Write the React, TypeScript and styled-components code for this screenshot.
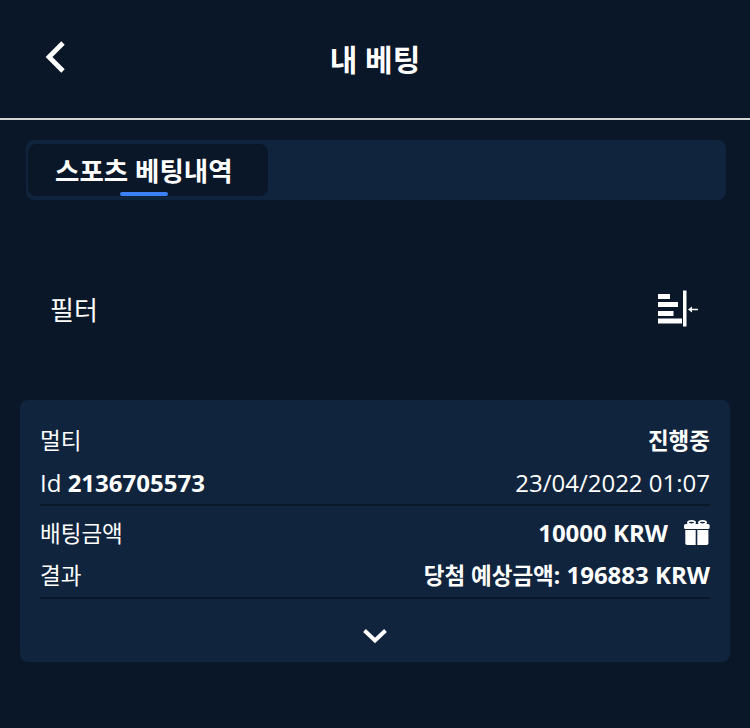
import React from "react";
import styled, { createGlobalStyle } from "styled-components";

const GlobalStyle = createGlobalStyle`
  html, body {
    margin: 0;
    padding: 0;
    background: #0a1729;
  }
  body {
    font-family: "Open Sans", "Noto Sans CJK KR", sans-serif;
    color: #ffffff;
  }
`;

const GiftIcon = () => (
  <svg width="26" height="25" viewBox="0 0 26 25" fill="none">
    <ellipse cx="7.5" cy="2.6" rx="3.6" ry="1.7" stroke="#fff" strokeWidth="1.8" />
    <ellipse cx="18.5" cy="2.6" rx="3.6" ry="1.7" stroke="#fff" strokeWidth="1.8" />
    <rect x="0" y="4" width="25.6" height="5" rx="1.5" fill="#fff" />
    <path d="M1.3 10 H11.7 V25 H3 Q1.3 25 1.3 23.3 Z" fill="#fff" />
    <path d="M13.3 10 H24.4 V23.3 Q24.4 25 22.7 25 H13.3 Z" fill="#fff" />
  </svg>
);

const App = () => {
  return (
    <Page>
      <GlobalStyle />
      <Header>
        <BackButton>
          <svg width="24" height="34" viewBox="0 0 24 34" fill="none">
            <path d="M19 3 L5 17 L19 31" stroke="#fff" strokeWidth="4.8" />
          </svg>
        </BackButton>
        <HeaderTitle>내 베팅</HeaderTitle>
      </Header>
      <TabBar>
        <ActiveTab>스포츠 베팅내역</ActiveTab>
      </TabBar>
      <FilterRow>
        <FilterLabel>필터</FilterLabel>
        <svg width="42" height="40" viewBox="0 0 42 40" fill="none">
          <rect x="2" y="4" width="12" height="5" fill="#fff" />
          <rect x="2" y="12" width="20" height="5" fill="#fff" />
          <rect x="2" y="21" width="15.5" height="5" fill="#fff" />
          <rect x="2" y="28.5" width="24" height="5" fill="#fff" />
          <rect x="27" y="0.5" width="3.5" height="36" fill="#fff" />
          <path d="M42 19.5 H34" stroke="#fff" strokeWidth="1.5" />
          <path d="M32 19.5 L36 16.5 V22.5 Z" fill="#fff" />
        </svg>
      </FilterRow>
      <Card>
        <Section>
          <Row>
            <Ko>멀티</Ko>
            <Ko $bold>진행중</Ko>
          </Row>
          <Row $low>
            <span>Id <Strong>2136705573</Strong></span>
            <span>23/04/2022 01:07</span>
          </Row>
        </Section>
        <Section>
          <Row>
            <Ko>배팅금액</Ko>
            <Amount>
              <Strong>10000 KRW</Strong>
              <GiftIcon />
            </Amount>
          </Row>
          <Row>
            <Ko>결과</Ko>
            <Strong><Ko $bold>당첨 예상금액:</Ko> 196883 KRW</Strong>
          </Row>
        </Section>
        <Expand>
          <svg width="26" height="16" viewBox="0 0 26 16" fill="none">
            <path d="M2.5 2.5 L13 12.5 L23.5 2.5" stroke="#fff" strokeWidth="4" />
          </svg>
        </Expand>
      </Card>
    </Page>
  );
};

const Page = styled.div`
  width: 750px;
  height: 728px;
  overflow: hidden;
  background: #0a1729;
`;

const Header = styled.header`
  position: relative;
  height: 118px;
  display: flex;
  align-items: center;
  justify-content: center;
  border-bottom: 2px solid #d4d4d4;
`;

const BackButton = styled.div`
  position: absolute;
  left: 44px;
  top: 40px;
  line-height: 0;
`;

const HeaderTitle = styled.h1`
  margin: 0 0 2px;
  font-size: 30px;
  font-weight: 700;
`;

const TabBar = styled.div`
  margin: 20px 24px 0 26px;
  height: 60px;
  box-sizing: border-box;
  padding: 4px 2px;
  background: #10243d;
  border-radius: 8px;
`;

const ActiveTab = styled.div`
  position: relative;
  width: 240px;
  height: 52px;
  box-sizing: border-box;
  padding: 0 0 2px 27px;
  display: flex;
  align-items: center;
  background: #0a1729;
  border-radius: 8px;
  font-size: 26.5px;
  font-weight: 700;

  &::after {
    content: "";
    position: absolute;
    left: 92px;
    bottom: 0;
    width: 48px;
    height: 4px;
    border-radius: 2px;
    background: #3b82f6;
  }
`;

const FilterRow = styled.div`
  margin-top: 80px;
  height: 60px;
  padding: 0 52px 0 50px;
  display: flex;
  align-items: center;
  justify-content: space-between;
`;

const FilterLabel = styled.span`
  font-size: 26px;
  margin-bottom: 3px;
`;

const Card = styled.section`
  margin: 60px 20px 0;
  height: 262px;
  box-sizing: border-box;
  padding: 20px 20px 0;
  background: #10243d;
  border-radius: 8px;
`;

const Section = styled.div`
  display: flex;
  flex-direction: column;
  border-bottom: 2px solid #0a1729;
  margin-bottom: 7px;
`;

const Row = styled.div<{ $low?: boolean }>`
  height: 42px;
  box-sizing: border-box;
  padding-bottom: ${({ $low }) => ($low ? "1px" : "3px")};
  display: flex;
  align-items: center;
  justify-content: space-between;
  font-size: 24px;
`;

const Ko = styled.span<{ $bold?: boolean }>`
  font-size: 22.5px;
  font-weight: ${({ $bold }) => ($bold ? 700 : 400)};
`;

const Strong = styled.strong`
  font-weight: 700;
`;

const Amount = styled.span`
  display: flex;
  align-items: center;
  gap: 16px;
`;

const Expand = styled.div`
  display: flex;
  justify-content: center;
  padding-top: 22px;
  line-height: 0;
`;

export default App;
